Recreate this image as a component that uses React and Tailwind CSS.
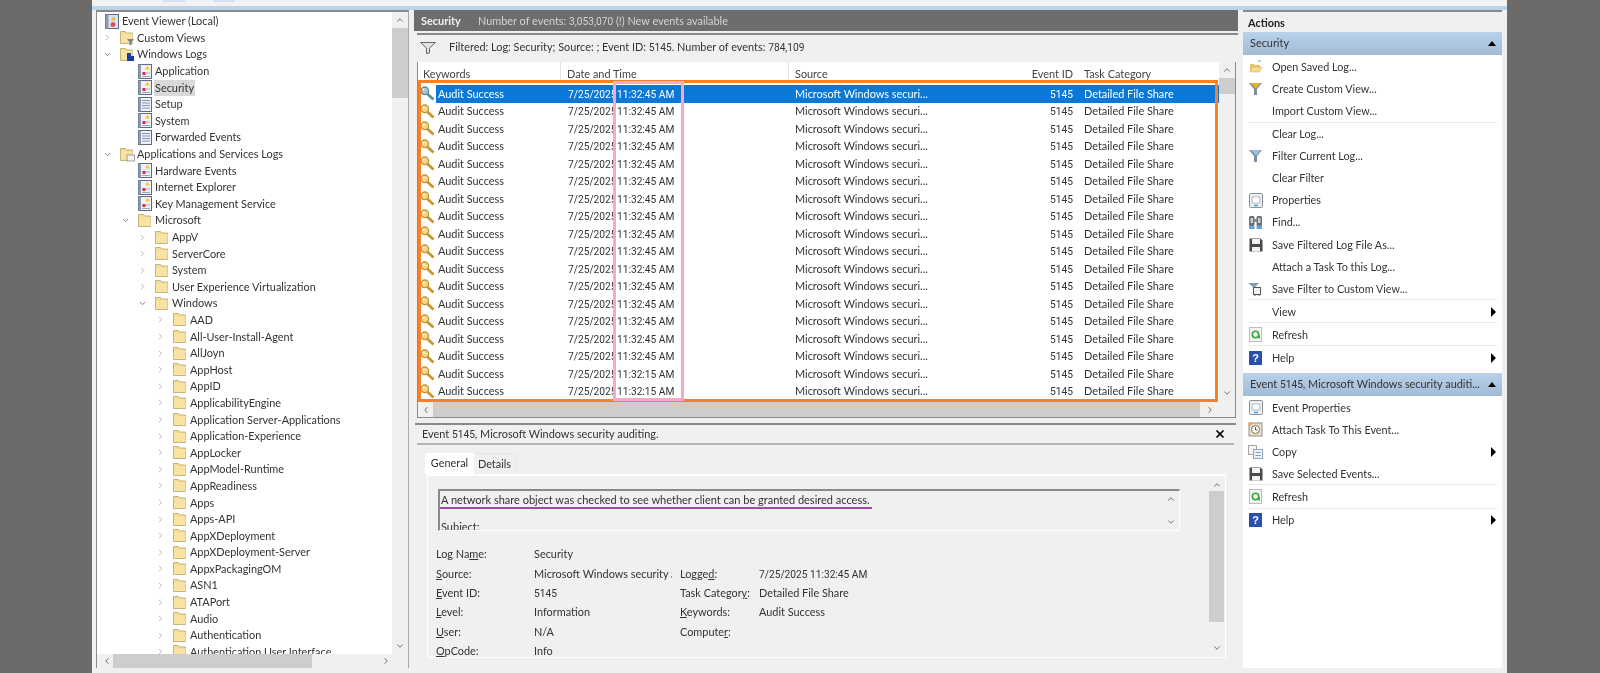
import React from "react";
import { ChevronUp, ChevronDown, ChevronLeft, ChevronRight, X } from "lucide-react";

const font = { fontFamily: "Lato, 'Open Sans', sans-serif" };

// Lato's figures are too wide next to the rest of the text
const Num = ({ children }) => <span className="font-['Roboto'] text-[10.2px]">{children}</span>;

const LogIcon = ({ plain }) => (
  <svg width="14" height="15" viewBox="0 0 14 15" className="shrink-0">
    <rect x="0.5" y="0.5" width="13" height="14" fill="#eef2f8" stroke="#5d6b82" />
    <rect x="0.5" y="0.5" width="2.5" height="14" fill="#8d9ab0" />
    {plain ? (
      <path d="M4 3.5h8M4 6h8M4 8.5h8M4 11h8" stroke="#7d93b8" />
    ) : (
      <>
        <path d="M9.5 1.5l2.5 4h-5z" fill="#f5c93a" />
        <rect x="4.5" y="8" width="3" height="3" fill="#d5303a" />
        <path d="M8 9h4M4 12.5h8" stroke="#9aa8c0" />
      </>
    )}
  </svg>
);

const Folder = ({ badge }) => (
  <svg width="15" height="15" viewBox="0 0 15 15" className="shrink-0">
    <path d="M0.5 13.5V1.5h5l1 1.5h6v10.5z" fill="#f6dc8f" stroke="#b9a469" strokeWidth="0.8" />
    <rect x="1" y="4" width="11.5" height="9" fill="#f8e3a3" />
    {badge === "filter" && <path d="M7 9h7l-2.5 3v3h-2v-3z" fill="#6f8196" />}
    {badge === "logs" && <path d="M7 6h4v3h3v5H7z" fill="#1c3aa8" />}
    {badge === "apps" && <rect x="7" y="8" width="7.5" height="6" fill="#f4f4f4" stroke="#8a8a8a" strokeWidth="0.8" />}
  </svg>
);

const RootIcon = () => (
  <svg width="14" height="15" viewBox="0 0 14 15" className="shrink-0">
    <rect x="0.5" y="0.5" width="13" height="14" fill="#dbe3f0" stroke="#5d6b82" />
    <rect x="0.5" y="0.5" width="3" height="14" fill="#8d9ab0" />
    <path d="M8.5 2l2.5 4.5H6z" fill="#f0b92d" />
    <circle cx="8" cy="10.5" r="2.5" fill="#e0505a" />
  </svg>
);

const KeyIcon = ({ selected }) => {
  const stroke = selected ? "#5f8f99" : "#c8962f";
  const fill = selected ? "#a9c6cc" : "#f3d78e";
  return (
    <svg width="15" height="15" viewBox="0 0 15 15" className="shrink-0">
      <path d="M7 7.5L13.5 13.5" stroke={stroke} strokeWidth="2.8" />
      <circle cx="4.8" cy="4.8" r="3.8" fill={fill} stroke={stroke} strokeWidth="1.3" />
      <circle cx="3.6" cy="3.6" r="1" fill="#fff8e6" />
    </svg>
  );
};

const tree = [
  [0, "Event Viewer (Local)", "root"],
  [1, "Custom Views", "filter", "closed"],
  [1, "Windows Logs", "logs", "open"],
  [2, "Application", "log"],
  [2, "Security", "log", null, true],
  [2, "Setup", "plain"],
  [2, "System", "log"],
  [2, "Forwarded Events", "plain"],
  [1, "Applications and Services Logs", "apps", "open"],
  [2, "Hardware Events", "log"],
  [2, "Internet Explorer", "log"],
  [2, "Key Management Service", "log"],
  [2, "Microsoft", "folder", "open"],
  [3, "AppV", "folder", "closed"],
  [3, "ServerCore", "folder", "closed"],
  [3, "System", "folder", "closed"],
  [3, "User Experience Virtualization", "folder", "closed"],
  [3, "Windows", "folder", "open"],
  ...[
    "AAD", "All-User-Install-Agent", "AllJoyn", "AppHost", "AppID", "ApplicabilityEngine",
    "Application Server-Applications", "Application-Experience", "AppLocker", "AppModel-Runtime",
    "AppReadiness", "Apps", "Apps-API", "AppXDeployment", "AppXDeployment-Server", "AppxPackagingOM",
    "ASN1", "ATAPort", "Audio", "Authentication", "Authentication User Interface",
  ].map((name) => [4, name, "folder", "closed"]),
];

const indents = ["w-[3px]", "w-[20px]", "w-[38px]", "w-[55px]", "w-[73px]"];

const TreeRow = ({ level, name, icon, toggle, selected }) => (
  <div className="flex items-center h-[16.6px] whitespace-nowrap">
    <div className={`${indents[level]} shrink-0 flex justify-end pr-[5px]`}>
      {toggle === "closed" && <ChevronRight size={9} className="shrink-0 text-[#a0a0a0]" />}
      {toggle === "open" && <ChevronDown size={9} className="shrink-0 text-[#555]" />}
    </div>
    <div className="w-[18px] shrink-0 flex justify-center ml-[1px]">
      {icon === "root" && <RootIcon />}
      {icon === "log" && <LogIcon />}
      {icon === "plain" && <LogIcon plain />}
      {icon === "folder" && <Folder />}
      {(icon === "filter" || icon === "logs" || icon === "apps") && <Folder badge={icon} />}
    </div>
    <span className={`text-[10.9px] leading-[16px] text-[#333] pl-[1px] pr-[1px] ${selected ? "bg-[#d9d9d9]" : ""}`}>
      {name}
    </span>
  </div>
);

const Sidebar = () => (
  <div className="w-[313px] shrink-0 ml-[4px] mb-[5px] bg-white border-t-2 border-l border-r border-[#8a8a8a] border-r-[#a8a8a8] flex flex-col">
    <div className="flex flex-1 min-h-0">
      <div className="flex-1 overflow-hidden pt-[1px]">
        {tree.map(([level, name, icon, toggle, selected], i) => (
          <TreeRow key={i} level={level} name={name} icon={icon} toggle={toggle} selected={selected} />
        ))}
      </div>
      <div className="w-[16px] bg-[#f0f0f0] flex flex-col items-center">
        <ChevronUp size={10} className="mt-[3px] text-[#555]" />
        <div className="w-full h-[70px] mt-[3px] bg-[#cdcdcd]" />
        <div className="flex-1" />
        <ChevronDown size={10} className="mb-[3px] text-[#555]" />
      </div>
    </div>
    <div className="h-[14px] bg-[#f0f0f0] flex items-center pl-[5px] pr-[17px]">
      <ChevronLeft size={10} className="text-[#555]" />
      <div className="ml-[1px] w-[199px] h-full bg-[#cdcdcd]" />
      <div className="flex-1" />
      <ChevronRight size={10} className="text-[#555]" />
    </div>
  </div>
);

const rows = Array.from({ length: 18 }, (_, i) => ({ time: i < 16 ? "11:32:45 AM" : "11:32:15 AM", selected: i === 0 }));

const EventRow = ({ time, selected }) => (
  <div className={`flex items-center h-[17.5px] text-[10.9px] whitespace-nowrap ${selected ? "text-white" : "text-[#333]"}`}>
    <div className="w-[18px] shrink-0 flex justify-center">
      <KeyIcon selected={selected} />
    </div>
    <div className={`flex flex-1 h-full items-center ${selected ? "bg-[#0b78d7]" : ""}`}>
      <span className="w-[132px] shrink-0 pl-[2px]">Audit Success</span>
      <span className="w-[45px] shrink-0 overflow-hidden"><Num>7/25/2025</Num></span>
      <span className="w-[182px] shrink-0 pl-[4px]"><Num>{time}</Num></span>
      <span className="w-[145px] shrink-0">Microsoft Windows securi...</span>
      <span className="w-[133px] shrink-0 text-right"><Num>5145</Num></span>
      <span className="pl-[11px]">Detailed File Share</span>
    </div>
  </div>
);

const EventTable = () => (
  <div className="relative h-[356px] shrink-0 mt-[1px] ml-[3px] mr-[2px] bg-white border-r border-b border-l border-[#8a8a8a] flex flex-col">
    <div className="flex flex-1 min-h-0">
      <div className="flex-1 min-w-0">
        <div className="flex h-[20px] items-center text-[10.9px] text-[#444] whitespace-nowrap">
          <span className="w-[143px] pl-[5px] pt-[4px] h-full border-r border-[#e4e4e4] flex items-center">Keywords</span>
          <span className="w-[228px] pl-[6px] pt-[4px] h-full border-r border-[#e4e4e4] flex items-center">Date and Time</span>
          <span className="w-[145px] pl-[6px] pt-[4px] h-full flex items-center">Source</span>
          <span className="w-[139px] pt-[4px] text-right">Event ID</span>
          <span className="pl-[11px] pt-[4px]">Task Category</span>
        </div>
        <div className="mt-[3px]">
          {rows.map((r, i) => (
            <EventRow key={i} time={r.time} selected={r.selected} />
          ))}
        </div>
      </div>
      <div className="w-[16px] bg-[#f0f0f0] flex flex-col items-center">
        <ChevronUp size={10} className="mt-[3px] text-[#555]" />
        <div className="w-full h-[16px] mt-[3px] bg-[#cdcdcd]" />
        <div className="flex-1" />
        <ChevronDown size={10} className="mb-[4px] text-[#555]" />
      </div>
    </div>
    <div className="h-[15px] shrink-0 bg-[#cdcdcd] flex items-center justify-between">
      <div className="w-[15px] h-full bg-[#f0f0f0] flex items-center justify-center">
        <ChevronLeft size={10} className="text-[#555]" />
      </div>
      <div className="w-[35px] h-full bg-[#f0f0f0] flex items-center pl-[5px]">
        <ChevronRight size={10} className="text-[#555]" />
      </div>
    </div>
    {/* highlight boxes drawn over the table */}
    <div className="absolute left-0 top-[18px] w-[800px] h-[322px] border-[3px] border-[#fb7f24] pointer-events-none" />
    <div className="absolute left-[195px] top-[19px] w-[71px] h-[320px] border-[3px] border-[#f8a8c8] pointer-events-none" />
  </div>
);

const Field = ({ label, ul, after, children }) => (
  <div className="flex items-center h-[19.3px] text-[10.9px] text-[#333] whitespace-nowrap">
    <span className="w-[98px] shrink-0">
      {label}
      <u>{ul}</u>
      {after}
    </span>
    <span className="w-[138px] overflow-hidden">{children}</span>
  </div>
);

const Field2 = ({ label, ul, after, children }) => (
  <div className="flex items-center h-[19.3px] text-[10.9px] text-[#333] whitespace-nowrap">
    <span className="w-[79px] shrink-0">
      {label}
      <u>{ul}</u>
      {after}
    </span>
    <span>{children}</span>
  </div>
);

const DetailPane = () => (
  <div className="flex-1 min-h-0 mt-[5px] border-t-2 border-[#8a8a8a] ml-[1px] mr-[2px] mb-[5px] bg-[#f0f0f0] flex flex-col">
    <div className="h-[20px] shrink-0 mx-[2px] border-b-2 border-[#b5b5b5] flex items-center justify-between pl-[5px] pr-[8px] text-[10.9px] text-[#333]">
      <span>Event <Num>5145</Num>, Microsoft Windows security auditing.</span>
      <X size={12} strokeWidth={3.5} className="text-black" />
    </div>
    <div className="flex shrink-0 ml-[10px] mt-[8px] h-[21px] text-[10.9px] text-[#333]">
      <div className="w-[49px] bg-white flex items-center justify-center">General</div>
      <div className="w-[42px] border-t border-r border-[#e6e6e6] flex items-center justify-center">Details</div>
    </div>
    <div className="flex-1 ml-[12px] mr-[10px] mb-[10px] border-r border-b border-l border-t-2 border-white min-h-0 flex overflow-hidden">
      <div className="flex-1 min-w-0 pl-[10px]">
        <div className="mt-[13px] h-[42px] w-[742px] border-t-2 border-l-2 border-[#8a8a8a] border-r border-b border-r-white border-b-white flex overflow-hidden relative">
          <div className="flex-1 pl-[1px] text-[11px] leading-[16px] text-[#333] overflow-hidden">
            <div className="mt-[1px]">A network share object was checked to see whether client can be granted desired access.</div>
            <div className="mt-[11px]">Subject:</div>
          </div>
          <div className="w-[17px] flex flex-col items-center justify-between py-[3px] text-[#555]">
            <ChevronUp size={10} />
            <ChevronDown size={10} />
          </div>
          <div className="absolute left-0 top-[16px] h-[2px] w-[432px] bg-[#9b4aa5]" />
        </div>
        <div className="flex mt-[14px] -ml-[2px]">
          <div className="w-[244px]">
            <Field label="Log Na" ul="m" after="e:">Security</Field>
            <Field ul="S" after="ource:">Microsoft Windows security auditing.</Field>
            <Field ul="E" after="vent ID:"><Num>5145</Num></Field>
            <Field ul="L" after="evel:">Information</Field>
            <Field ul="U" after="ser:">N/A</Field>
            <Field ul="O" after="pCode:">Info</Field>
          </div>
          <div className="pt-[19.3px]">
            <Field2 label="Logge" ul="d" after=":"><Num>7/25/2025 11:32:45 AM</Num></Field2>
            <Field2 label="Task Categor" ul="y" after=":">Detailed File Share</Field2>
            <Field2 ul="K" after="eywords:">Audit Success</Field2>
            <Field2 label="Compute" ul="r" after=":" />
          </div>
        </div>
      </div>
      <div className="w-[15px] shrink-0 flex flex-col items-center text-[#555] bg-[#f0f0f0] mr-[1px]">
        <ChevronUp size={10} className="mt-[4px]" />
        <div className="w-full h-[131px] mt-[1px] bg-[#cdcdcd]" />
        <div className="flex-1" />
        <ChevronDown size={10} className="mb-[4px]" />
      </div>
    </div>
  </div>
);

const CenterPane = () => (
  <div className="w-[824px] shrink-0 ml-[5px] flex flex-col">
    <div className="h-[21px] shrink-0 bg-[#6d6d6d] flex items-center pl-[7px] pt-[1px] text-[10.9px] whitespace-nowrap">
      <span className="font-bold text-[#f2f2f2] w-[57px]">Security</span>
      <span className="text-[#d4d4d4]">Number of events: <Num>3,053,070</Num> (!) New events available</span>
    </div>
    <div className="h-[28px] shrink-0 mt-[2px] ml-[3px] pb-[1px] border-t-2 border-[#8a8a8a] bg-[#f0f0f0] flex items-center pl-[3px] text-[10.9px] text-[#333]">
      <svg width="16" height="12" viewBox="0 0 16 12" className="shrink-0">
        <path d="M0.5 0.5h15L9.5 6v5l-3 0.5V6z" fill="#e4e4e4" stroke="#666" />
      </svg>
      <span className="ml-[13px]">Filtered: Log: Security; Source: ; Event ID: <Num>5145</Num>. Number of events: <Num>784,109</Num></span>
    </div>
    <EventTable />
    <DetailPane />
  </div>
);

const Icon = ({ name }) => {
  if (name === "open")
    return (
      <svg width="14" height="14" viewBox="0 0 14 14">
        <path d="M1 12V4h4l1 1h5v2H4l-3 5z" fill="#e9c46f" />
        <path d="M1 12l2.5-5H13l-2.5 5z" fill="#f6dc8f" stroke="#c9a75a" strokeWidth="0.5" />
        <path d="M9 1h3" stroke="#5cb85c" />
      </svg>
    );
  if (name === "customview" || name === "filter")
    return (
      <svg width="15" height="14" viewBox="0 0 14 14">
        <path d="M0.5 1h13L8.5 7v6h-3V7z" fill="#7c8da3" />
        <path d="M2 1h10L7.5 6.5z" fill={name === "customview" ? "#f3b01f" : "#9cc0dc"} />
      </svg>
    );
  if (name === "props")
    return (
      <svg width="14" height="15" viewBox="0 0 14 15">
        <rect x="0.5" y="0.5" width="13" height="14" rx="1" fill="#eef0f3" stroke="#8f8f8f" />
        <path d="M3 4h8v6H3z" fill="#fff" stroke="#a9bdd0" />
        <path d="M5 12.5h4" stroke="#3aa3dd" strokeWidth="1.5" />
      </svg>
    );
  if (name === "find")
    return (
      <svg width="15" height="15" viewBox="0 0 15 15">
        <rect x="1" y="1" width="5.5" height="10" rx="1.5" fill="#6a7078" />
        <rect x="8.5" y="1" width="5.5" height="10" rx="1.5" fill="#6a7078" />
        <rect x="2.5" y="3" width="2.5" height="5" fill="#c9ced4" />
        <rect x="10" y="3" width="2.5" height="5" fill="#c9ced4" />
        <rect x="6" y="4" width="3" height="3" fill="#8a8a8a" />
        <rect x="1" y="11" width="5.5" height="3" fill="#5aa6e0" />
        <rect x="8.5" y="11" width="5.5" height="3" fill="#5aa6e0" />
      </svg>
    );
  if (name === "save")
    return (
      <svg width="14" height="14" viewBox="0 0 14 14">
        <path d="M0.5 0.5h11l2 2v11h-13z" fill="#4a4a4a" />
        <rect x="3" y="1" width="8" height="5" fill="#f2f2f2" />
        <rect x="3" y="9" width="8" height="4.5" fill="#f2f2f2" />
      </svg>
    );
  if (name === "savefilter")
    return (
      <svg width="15" height="14" viewBox="0 0 15 14">
        <path d="M0 1h11L7 5v2H5V5z" fill="#7f9db8" />
        <rect x="5.5" y="5.5" width="7" height="7" fill="#f4f4f4" stroke="#555" />
        <path d="M7 13v1M11 13v1" stroke="#555" />
      </svg>
    );
  if (name === "refresh")
    return (
      <svg width="13" height="15" viewBox="0 0 13 15">
        <rect x="0.5" y="0.5" width="12" height="14" fill="#f5f5f5" stroke="#bdbdbd" />
        <circle cx="6.5" cy="7.5" r="3.2" fill="none" stroke="#3aa83a" strokeWidth="1.6" />
        <path d="M8 10l3 2V8z" fill="#3aa83a" />
      </svg>
    );
  if (name === "help")
    return (
      <svg width="13" height="14" viewBox="0 0 13 14">
        <rect width="13" height="14" fill="#2b4fae" />
        <text x="6.5" y="11" textAnchor="middle" fontSize="11" fontWeight="700" fill="#fff" fontFamily="Liberation Sans, sans-serif">?</text>
      </svg>
    );
  if (name === "attach")
    return (
      <svg width="15" height="15" viewBox="0 0 15 15">
        <rect x="1" y="1" width="13" height="13" fill="#e6e0d4" stroke="#8f8f8f" />
        <circle cx="7.5" cy="7.5" r="4" fill="#fff" stroke="#8a6a3a" />
        <path d="M7.5 5v3h2" stroke="#555" fill="none" />
        <circle cx="2" cy="2" r="1.6" fill="#f2a33a" />
      </svg>
    );
  if (name === "copy")
    return (
      <svg width="15" height="14" viewBox="0 0 15 14">
        <rect x="0.5" y="0.5" width="8" height="9" fill="#f5f5f5" stroke="#a5a5a5" />
        <rect x="5.5" y="4.5" width="9" height="9" fill="#eaf1fa" stroke="#8fa5c0" />
        <path d="M7.5 7.5h5M7.5 10.5h5" stroke="#7f9db8" />
      </svg>
    );
  return null;
};

const ActionRow = ({ icon, label, arrow, sep, tall }) => (
  <div className={`relative flex items-center ${tall ? "h-[23.2px]" : "h-[22.2px]"} text-[10.8px] text-[#333] whitespace-nowrap shrink-0`}>
    <div className="w-[15px] ml-[5px] shrink-0 flex justify-center">{icon && <Icon name={icon} />}</div>
    <span className="ml-[9px]">{label}</span>
    {arrow && <div className="ml-auto mr-[6px] w-0 h-0 border-y-[5px] border-y-transparent border-l-[5px] border-l-black" />}
    {sep && <div className="absolute left-[5px] right-[5px] bottom-0 h-px bg-[#ececec]" />}
  </div>
);

const ActionHeader = ({ children }) => (
  <div className="h-[23px] shrink-0 bg-gradient-to-b from-[#b9d1ea] to-[#a2bbd7] flex items-center justify-between pl-[7px] pr-[6px] text-[10.9px] text-[#333] whitespace-nowrap">
    <span>{children}</span>
    <div className="w-0 h-0 border-x-[4.5px] border-x-transparent border-b-[5px] border-b-black" />
  </div>
);

const Actions = () => (
  <div className="w-[259px] shrink-0 ml-[5px] mb-[5px] bg-white border-t-2 border-[#8a8a8a] flex flex-col">
    <div className="h-[20px] shrink-0 bg-[#f0f0f0] flex items-center pl-[5px] pt-[2px] text-[10.9px] font-bold text-[#222]">Actions</div>
    <ActionHeader>Security</ActionHeader>
    <div className="h-[1px] shrink-0" />
    <ActionRow icon="open" label="Open Saved Log..." />
    <ActionRow icon="customview" label="Create Custom View..." />
    <ActionRow label="Import Custom View..." sep />
    <ActionRow label="Clear Log..." />
    <ActionRow icon="filter" label="Filter Current Log..." />
    <ActionRow label="Clear Filter" />
    <ActionRow icon="props" label="Properties" />
    <ActionRow icon="find" label="Find..." />
    <ActionRow icon="save" label="Save Filtered Log File As..." />
    <ActionRow label="Attach a Task To this Log..." />
    <ActionRow icon="savefilter" label="Save Filter to Custom View..." sep />
    <ActionRow label="View" arrow tall sep />
    <ActionRow icon="refresh" label="Refresh" tall sep />
    <ActionRow icon="help" label="Help" arrow tall />
    <div className="h-[3px] shrink-0" />
    <ActionHeader>Event <Num>5145</Num>, Microsoft Windows security auditi...</ActionHeader>
    <div className="h-[1px] shrink-0" />
    <ActionRow icon="props" label="Event Properties" />
    <ActionRow icon="attach" label="Attach Task To This Event..." />
    <ActionRow icon="copy" label="Copy" arrow />
    <ActionRow icon="save" label="Save Selected Events..." sep />
    <ActionRow icon="refresh" label="Refresh" tall sep />
    <ActionRow icon="help" label="Help" arrow tall />
  </div>
);

export default function App() {
  return (
    <div className="w-[1600px] h-[673px] overflow-hidden bg-[#6b6b6b] flex blur-[0.35px]" style={font}>
      <div className="w-[92px] shrink-0" />
      <div className="w-[1415px] shrink-0 bg-[#f0f0f0] flex flex-col">
        <div className="h-[6px] shrink-0 bg-[#f2f2f2] flex items-start">
          <div className="ml-[71px] w-[22px] h-[2px] bg-[#d3e3f2]" />
          <div className="ml-[28px] w-[22px] h-[2px] bg-[#d3e3f2]" />
        </div>
        <div className="h-[4px] shrink-0 bg-[#bcd4ea]" />
        <div className="flex-1 min-h-0 flex">
          <Sidebar />
          <CenterPane />
          <Actions />
        </div>
      </div>
    </div>
  );
}
